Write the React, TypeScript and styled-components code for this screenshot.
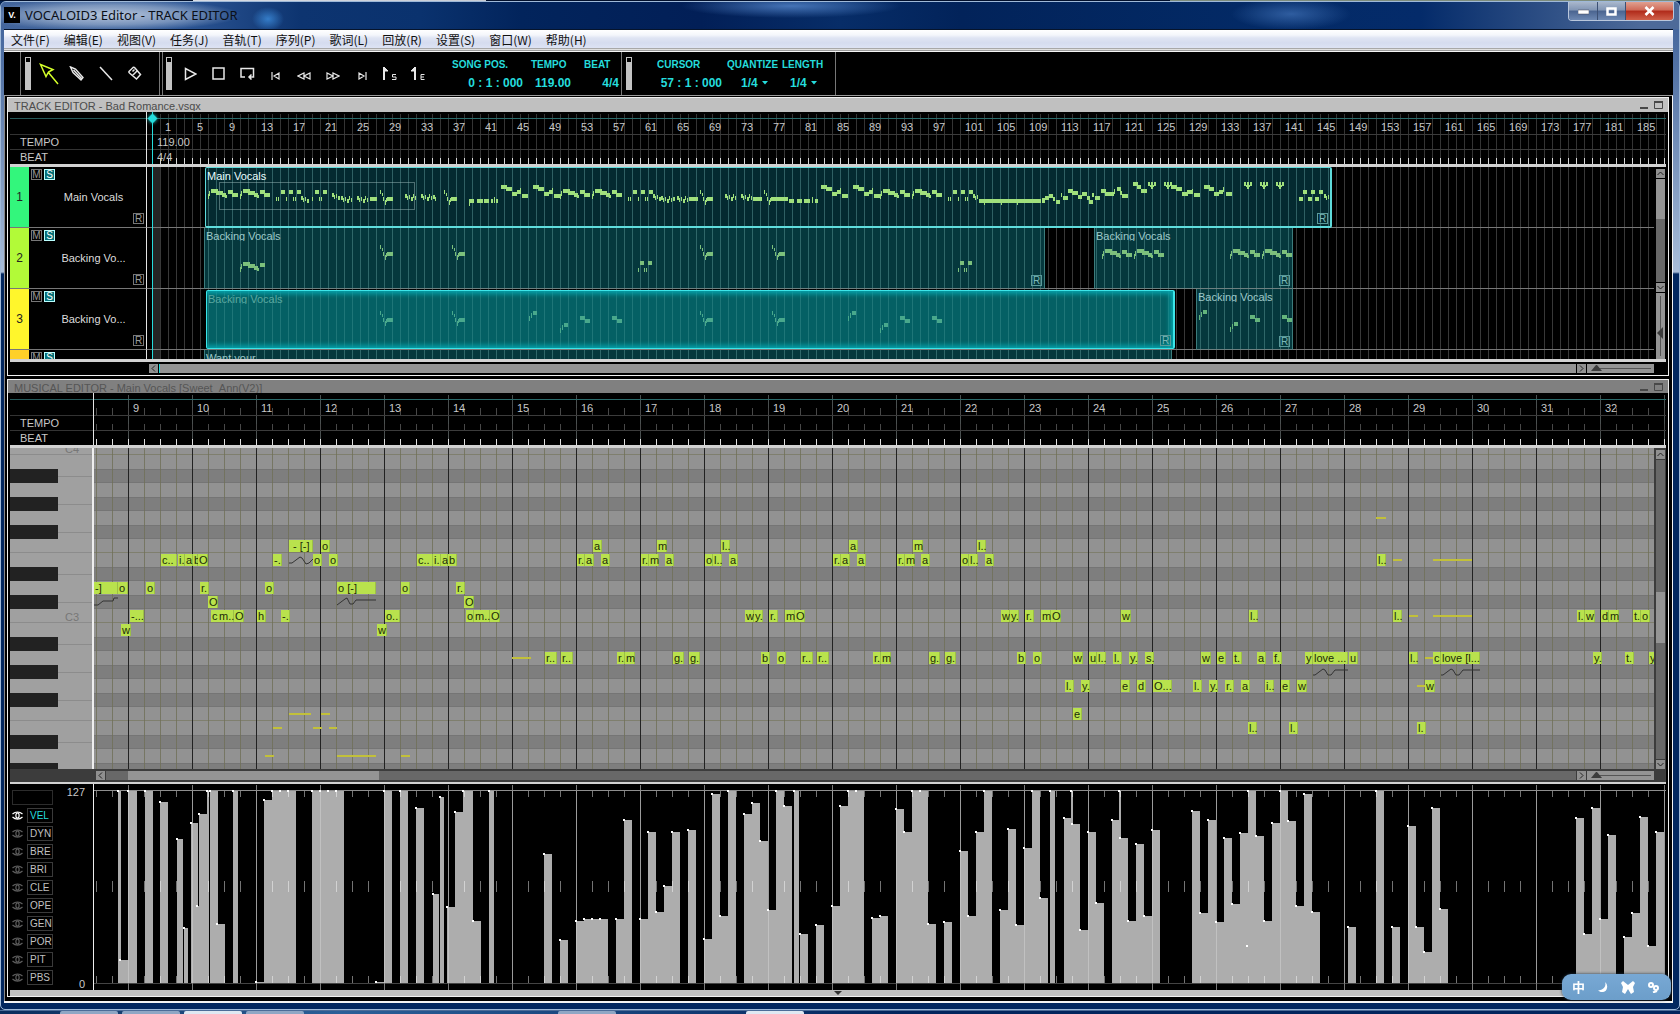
import React from "react";
import styled, { createGlobalStyle, css } from "styled-components";

/* ---------- theme values ---------- */

const UI = `"Liberation Sans", Arial, "Noto Sans CJK SC", sans-serif`;
const MENU = `"Noto Sans CJK SC", "Noto Sans", sans-serif`;
const CYAN = "#25dcdc";

const Global = createGlobalStyle`
  * { box-sizing: border-box; }
  html, body { margin: 0; background: #02204f; }
  body { font-family: ${UI}; font-size: 11px; color: #c8c8c8; overflow: hidden; }
  button, select { font: inherit; color: inherit; background: none; border: 0; padding: 0; margin: 0; }
`;

/* ---------- window chrome ---------- */

const Desktop = styled.div`
  display: flex;
  flex-direction: column;
  height: 100vh;
  min-height: 860px;
`;

const Backdrop = styled.div`
  flex: none;
  height: 1px;
  background: linear-gradient(90deg, #02102c 193px, #d8dce4 193px, #c8ccd4 486px, #02102c 486px, #02102c 1170px, #7d8c7c 1170px);
`;

const Window = styled.div`
  flex: 1;
  min-height: 0;
  display: flex;
  flex-direction: column;
  border: 1px solid #9fb9d8;
  border-radius: 6px 6px 5px 5px;
  padding: 0 6px 6px 3px;
  background: linear-gradient(180deg, #3c5f98 0, #5877a8 80px, #a9bdd8 270px, #02275f 272px, #02275f 100%);
  overflow: hidden;
`;

const TitleBar = styled.header`
  flex: none;
  display: flex;
  align-items: flex-start;
  height: 27px;
  margin: 0 -6px 0 -3px;
  padding-right: 5px;
  background:
    radial-gradient(ellipse 130px 16px at 110px 13px, rgba(225, 232, 242, 0.75), rgba(190, 205, 225, 0.5) 60%, transparent),
    radial-gradient(ellipse 16px 12px at 267px 17px, rgba(60, 140, 220, 0.8), transparent),
    radial-gradient(ellipse 110px 12px at 790px 4px, rgba(90, 140, 210, 0.75), transparent),
    radial-gradient(ellipse 60px 16px at 1290px 12px, rgba(70, 120, 190, 0.65), transparent),
    linear-gradient(90deg, #44669c 0, #2d5695 180px, #0d3470 300px, #0a326e 420px, #02245c 520px, #021f57 700px, #072d68 840px, #02235a 960px, #032a66 1260px, #042b6a 1420px, #4d6a99 1640px);
`;

const AppIcon = styled.span`
  width: 16px;
  height: 16px;
  margin: 5px 5px 0 3px;
  background: #000;
  color: #fff;
  font: bold 9px/16px ${UI};
  text-align: center;
`;

const Title = styled.h1`
  flex: 1;
  margin: 4px 0 0;
  font: 13px/18px "Noto Sans", sans-serif;
  color: #0a0f18;
`;

const Captions = styled.div`
  display: flex;
  height: 19px;
  border: 1px solid #b9c7dc;
  border-top: 0;
  border-radius: 0 0 4px 4px;
  overflow: hidden;
`;

const Caption = styled.button<{ $close?: boolean }>`
  width: ${(p) => (p.$close ? 48 : 28)}px;
  display: grid;
  place-items: center;
  background: ${(p) =>
    p.$close
      ? "linear-gradient(#e0a090 0, #cf6a58 45%, #b02a1a 50%, #d0604a 100%)"
      : "linear-gradient(#a9b7cc 0, #8195b4 45%, #4a6490 50%, #6d88b2 100%)"};
  & + & { border-left: 1px solid #3c5074; }
`;

const MenuBar = styled.nav`
  flex: none;
  display: flex;
  height: 23px;
  border-top: 1px solid #06142c;
  border-bottom: 1px solid #f4f4f4;
  box-shadow: inset 0 -1px #9a9a9a, inset 0 -2px #e0e0e0, inset 0 -3px #a8a8a8;
  background: linear-gradient(#fff 0, #f4f6fb 5px, #dfe4f3 8px, #d5dcef 13px, #dde3f4 18px);
`;

const MenuItem = styled.button`
  padding: 0 7px 2px;
  font: 12px/16px ${MENU};
  color: #111;
`;

/* ---------- tool bar ---------- */

const ToolBar = styled.div`
  flex: none;
  display: flex;
  height: 43px;
  background: #000;
  padding-left: 16px;
`;

const ToolGroup = styled.div<{ $end?: boolean; $double?: boolean; $w?: number }>`
  display: flex;
  align-items: center;
  width: ${(p) => (p.$w ? `${p.$w}px` : "auto")};
  border-left: 1px solid #777;
  ${(p) => p.$end && css`border-right: 1px solid #777;`}
  ${(p) => p.$double && css`padding-left: 2px; box-shadow: inset 2px 0 #000, inset 3px 0 #777;`}
`;

const Grip = styled.span`
  width: 6px;
  height: 33px;
  margin: 0 3px 0 4px;
  background: #c4c4c4;
  &::before {
    content: "";
    display: block;
    width: 4px;
    height: 4px;
    margin: 1px;
    background: #000;
  }
`;

const Tool = styled.button<{ $w: number; $on?: boolean }>`
  width: ${(p) => p.$w}px;
  height: 43px;
  display: grid;
  place-items: center;
  color: ${(p) => (p.$on ? "#d4ff2a" : "#e8e8e8")};
`;

const Readout = styled.div<{ $w: number; $pad?: number }>`
  display: flex;
  flex-direction: column;
  width: ${(p) => p.$w}px;
  padding-top: 2px;
  color: ${CYAN};
  font-weight: bold;
  & > span:first-child, & > label { font-size: 10px; line-height: 12px; }
  & > span:last-child { font-size: 12px; line-height: 16px; margin-top: 4px; text-align: right; padding-right: ${(p) => p.$pad ?? 0}px; white-space: pre; }
`;

const Pick = styled.span`
  display: flex;
  align-items: center;
  justify-content: flex-end;
  select { appearance: none; width: 21px; font-size: 12px; font-weight: bold; line-height: 16px; color: ${CYAN}; }
`;

const Readouts = styled.div<{ $pad: number }>`
  display: flex;
  padding-left: ${(p) => p.$pad}px;
`;

/* ---------- editor panels ---------- */

const Workspace = styled.main`
  flex: 1;
  min-height: 0;
  display: flex;
  flex-direction: column;
  gap: 3px;
  padding: 1px 3px 4px 3px;
  background: #000;
  border-top: 1px solid #9a9a9a;
  border-bottom: 2px solid #f4f4f4;
  border-right: 1px solid #f4f4f4;
  box-shadow: inset 1px 0 #888;
`;

const Panel = styled.section<{ $grow?: boolean }>`
  ${(p) => (p.$grow ? css`flex: 1; min-height: 0;` : css`flex: none;`)}
  display: flex;
  flex-direction: column;
  border: 1px solid #f0f0f0;
  background: #000;
`;

const PanelTitle = styled.h2<{ $dim?: boolean }>`
  flex: none;
  display: flex;
  align-items: center;
  gap: 6px;
  height: ${(p) => (p.$dim ? 13 : 14)}px;
  margin: 0;
  padding: 0 5px 0 6px;
  overflow: hidden;
  font: 11px/14px ${UI};
  color: ${(p) => (p.$dim ? "#555" : "#4c4c4c")};
  background: ${(p) => (p.$dim ? "#808080" : "#c0c0c0")};
  span { flex: 1; height: 12px; line-height: 14px; overflow: hidden; }
  button { height: 12px; color: #484848; display: grid; }
`;

const Row = styled.div`
  flex: none;
  display: flex;
  padding-left: 2px;
`;

const Divider = styled.div<{ $h?: number }>`
  flex: none;
  height: ${(p) => p.$h ?? 3}px;
  margin: 0 2px;
  background: #d2d2d2;
`;

const RulerHead = styled.div<{ $w: number }>`
  flex: none;
  width: ${(p) => p.$w}px;
  padding-top: 22px;
  border-right: 1px solid #e4e4e4;
  background:
    linear-gradient(#26595a, #26595a) 0 6px / 100% 1px no-repeat,
    linear-gradient(#333, #333) 0 22px / 100% 1px no-repeat,
    linear-gradient(#333, #333) 0 37px / 100% 1px no-repeat;
  div { padding-left: 10px; line-height: 15px; height: 15px; padding-top: 1px; }
`;

const rulerRules = `
  linear-gradient(#2b6a6a, #2b6a6a) 0 6px / 100% 1px no-repeat,
  linear-gradient(#3c3c3c, #3c3c3c) 0 22px / 100% 1px no-repeat,
  linear-gradient(#3c3c3c, #3c3c3c) 0 37px / 100% 1px no-repeat`;

const SongRuler = styled.div`
  flex: 1;
  min-width: 0;
  margin-right: 2px;
  height: 52px;
  padding: 7px 0 0 10px;
  overflow: hidden;
  background:
    linear-gradient(90deg, #d8d8d8 1px, transparent 1px) 5px 46px / 8px 6px repeat-x,
    ${rulerRules},
    linear-gradient(90deg, #343434 1px, transparent 1px) 5px 2px / 8px 50px repeat-x;
  div { line-height: 15px; height: 15px; padding-top: 1px; }
`;

const BarRuler = styled.div`
  flex: 1;
  min-width: 0;
  margin-right: 2px;
  height: 52px;
  padding-top: 7px;
  overflow: hidden;
  background:
    linear-gradient(90deg, #e0e0e0 1px, transparent 1px) 2px 46px / 16px 6px repeat-x,
    linear-gradient(90deg, #484848 1px, transparent 1px) 2px 31px / 16px 6px repeat-x,
    linear-gradient(90deg, #484848 1px, transparent 1px) 2px 15px / 16px 7px repeat-x,
    ${rulerRules},
    linear-gradient(90deg, #4a5050 1px, transparent 1px) 34px 2px / 64px 50px repeat-x;
`;

const Numbers = styled.ol<{ $start: number; $step: number }>`
  display: flex;
  margin: 0;
  padding: 0 0 0 ${(p) => p.$start}px;
  list-style: none;
  height: 15px;
  li { flex: none; width: ${(p) => p.$step}px; padding-left: 5px; line-height: 15px; padding-top: 1px; white-space: nowrap; }
`;

/* ---------- track list ---------- */

const Tracks = styled.div`
  position: relative;
  flex: 1;
  min-width: 0;
  height: 192px;
  overflow: hidden;
`;

const TrackRow = styled.div`
  display: flex;
  height: 61px;
  & > * { border-bottom: 1px solid #777; }
`;

const TrackNo = styled.div<{ $c: string }>`
  flex: none;
  width: 19px;
  padding-top: 23px;
  line-height: 14px;
  text-align: center;
  font-size: 12px;
  color: #222;
  background: ${(p) => p.$c};
`;

const TrackHead = styled.div`
  flex: none;
  width: 118px;
  display: grid;
  grid-template: 12px 1fr 12px / 12px 1fr 12px;
  gap: 0 1px;
  padding: 2px 1px 2px 2px;
  border-right: 1px solid #e4e4e4;
  span { grid-area: 2 / 1 / 3 / 4; align-self: center; text-align: center; padding-left: 11px; color: #ddd; height: 12px; line-height: 12px; overflow: hidden; }
`;

const Flag = styled.button<{ $on?: boolean }>`
  width: 11px;
  height: 11px;
  font-size: 10px;
  line-height: 9px;
  text-align: center;
  border: 1px solid ${(p) => (p.$on ? "#bff" : "#777")};
  background: ${(p) => (p.$on ? "#067078" : "transparent")};
  color: ${(p) => (p.$on ? "#fff" : "#999")};
`;

const RenderFlag = styled(Flag)`
  grid-area: 3 / 3;
`;

const Lane = styled.div`
  position: relative;
  flex: 1;
  min-width: 0;
  background:
    linear-gradient(90deg, transparent 6px, #242424 6px, #242424 13px, transparent 13px),
    linear-gradient(90deg, #383838 1px, transparent 1px) 5px 0 / 8px 100% repeat-x;
`;

const Clip = styled.div<{ $x: number; $w: number; $kind: "active" | "idle" | "picked" }>`
  position: absolute;
  left: ${(p) => p.$x}px;
  width: ${(p) => p.$w}px;
  top: 0;
  bottom: -1px;
  overflow: hidden;
  border: solid #3c7c7c;
  border-width: 0 1px;
  color: #9fcaca;
  --grid: rgba(90, 150, 150, 0.5);
  ${(p) => p.$kind === "active" && css`
    border: 2px solid #5fdcdc; border-width: 1px 2px 2px 1px; border-radius: 2px; background-color: #042a30; color: #e8ffff;
  `}
  ${(p) => p.$kind === "idle" && css`background-color: #05383d; border-bottom: 1px solid #6d8080;`}
  ${(p) => p.$kind === "picked" && css`
    top: 1px; bottom: 0; border: 1px solid #3ce4e8; border-right-width: 2px; border-radius: 2px; background-color: #046064; color: #5aa8a0;
    box-shadow: inset 0 6px 5px -3px #06a0a8, inset 0 -6px 5px -3px #06a0a8, inset -6px 0 5px -3px #06a0a8;
    --grid: rgba(70, 150, 150, 0.4);
  `}
  background-image: linear-gradient(90deg, var(--grid) 1px, transparent 1px);
  background-size: 8px 100%;
  background-position: ${(p) => (((5 - p.$x) % 8) + 8) % 8 - 1}px 0;
  p { margin: 0; padding: 2px 0 0 1px; height: 13px; line-height: 12px; overflow: hidden; white-space: nowrap; }
  svg { position: absolute; left: -1px; top: 0; }
  button { position: absolute; right: 2px; bottom: 2px; border-color: #5a9a9a; color: #7ab8b8; }
`;

const ViewFrame = styled.div`
  position: absolute;
  left: 72px;
  width: 196px;
  top: 15px;
  height: 28px;
  border: 1px solid rgba(150, 180, 180, 0.5);
`;

const Playhead = styled.div`
  position: absolute;
  left: 142px;
  top: 0;
  bottom: 0;
  width: 1px;
  background: ${CYAN};
`;

const RulerCursor = styled.div`
  position: relative;
  i {
    position: absolute;
    left: 5px;
    top: 0;
    width: 1px;
    height: 52px;
    background: ${CYAN};
    &::before {
      content: "";
      position: absolute;
      left: -3px;
      top: 3px;
      width: 7px;
      height: 7px;
      transform: rotate(45deg);
      background: ${CYAN};
      box-shadow: 0 0 4px ${CYAN};
    }
  }
`;

/* ---------- scroll bars ---------- */

const HBar = styled.div<{ $dim?: boolean; $pad: number }>`
  flex: none;
  display: flex;
  align-items: center;
  height: 13px;
  padding: 0 12px 0 ${(p) => p.$pad}px;
  margin: 0 2px;
  background: ${(p) => (p.$dim ? "#3c3c3c" : "#000")};
`;

const VBar = styled.div<{ $dim?: boolean }>`
  flex: none;
  width: 12px;
  margin-right: 2px;
  padding: 2px 1px 0 2px;
  display: flex;
  flex-direction: column;
  gap: 1px;
  background: ${(p) => (p.$dim ? "#3c3c3c" : "#000")};
`;

const Arrow = styled.button`
  flex: none;
  display: grid;
  place-items: center;
  width: 9px;
  height: 9px;
  background: #909090;
  color: #222;
`;

const Groove = styled.div<{ $v?: boolean; $c?: string; $lead?: number }>`
  flex: 1;
  display: flex;
  flex-direction: ${(p) => (p.$v ? "column" : "row")};
  ${(p) => (p.$v ? css`width: 9px; padding-top: ${p.$lead ?? 0}px;` : css`height: 9px; padding-left: ${p.$lead ?? 0}px; margin: 0 1px;`)}
  background: ${(p) => p.$c ?? "#686868"};
`;

const Thumb = styled.div<{ $len?: number; $v?: boolean }>`
  ${(p) => (p.$v ? css`height: ${p.$len}px;` : p.$len ? css`width: ${p.$len}px;` : css`flex: 1; border-left: 1px solid ${CYAN};`)}
  background: #949494;
`;

const Zoom = styled.div<{ $v?: boolean }>`
  flex: none;
  display: grid;
  place-items: center;
  background: #949494;
  ${(p) => (p.$v ? css`width: 9px; height: 66px;` : css`height: 9px; width: 67px; margin-left: 1px;`)}
`;

/* ---------- piano roll ---------- */

const Roll = styled.div`
  flex: 1;
  min-height: 0;
  display: flex;
  padding-left: 2px;
`;

const Keyboard = styled.div`
  flex: none;
  width: 84px;
  overflow: hidden;
  background: #a0a0a0;
  border-right: 2px solid #eee;
`;

const Key = styled.div<{ $black?: boolean; $cut?: boolean; $seam?: boolean }>`
  height: ${(p) => (p.$cut ? 7 : 14)}px;
  display: flex;
  align-items: flex-end;
  overflow: hidden;
  color: #777;
  box-shadow: ${(p) => (p.$seam ? "inset 0 -1px #8c8c8c" : "none")};
  background: ${(p) => (p.$black ? "linear-gradient(90deg, #222 48px, transparent 48px), linear-gradient(transparent 7px, #8c8c8c 7px, #8c8c8c 8px, transparent 8px)" : "none")};
  span { padding-left: 55px; line-height: 12px; }
`;

const NoteGrid = styled.div`
  position: relative;
  flex: 1;
  min-width: 0;
  overflow: hidden;
  background: #929292;
  box-shadow: inset 0 1px #444;
`;

const Pitch = styled.div<{ $black?: boolean; $cut?: boolean; $seam?: boolean }>`
  height: ${(p) => (p.$cut ? 7 : 14)}px;
  background: ${(p) => (p.$black ? "#7e7e7e" : "#929292")};
  box-shadow: ${(p) => (p.$seam ? "inset 0 -1px #7f7f6e" : p.$black ? "inset 0 1px #757575, inset 0 -1px #757575" : "none")};
`;

const BeatLines = styled.div`
  position: absolute;
  inset: 0;
  background:
    linear-gradient(90deg, #222 1px, transparent 1px) 34px 0 / 64px 100% repeat-x,
    linear-gradient(90deg, rgba(112, 112, 88, 0.8) 1px, transparent 1px) 2px 0 / 16px 100% repeat-x;
`;

const Note = styled.div<{ $x: number; $w: number; $row: number }>`
  position: absolute;
  left: ${(p) => p.$x - 94}px;
  top: ${(p) => p.$row * 14 - 6}px;
  width: ${(p) => p.$w}px;
  height: 12px;
  padding-left: 1px;
  overflow: hidden;
  white-space: pre;
  font-size: 11px;
  line-height: 13px;
  color: #1c2a08;
  background: #b9e24d;
  box-shadow: inset -1px 0 #9cc045;
`;

const Ghost = styled.div<{ $x: number; $w: number; $row: number }>`
  position: absolute;
  left: ${(p) => p.$x - 94}px;
  top: ${(p) => p.$row * 14 - 1}px;
  width: ${(p) => p.$w}px;
  height: 2px;
  background: #c2c03a;
`;

const Curves = styled.svg`
  position: absolute;
  left: 0;
  top: 0;
`;

/* ---------- control parameters ---------- */

const Control = styled.div`
  flex: none;
  display: flex;
  height: 206px;
  padding-left: 2px;
`;

const Params = styled.div`
  flex: none;
  width: 50px;
  padding: 6px 7px 0 2px;
  display: flex;
  flex-direction: column;
  gap: 3px;
  & > div:first-child { height: 15px; border: 1px solid #2c2c2c; }
`;

const Param = styled.div`
  display: flex;
  align-items: center;
  justify-content: space-between;
  height: 15px;
`;

const ParamName = styled.button<{ $on?: boolean }>`
  width: 26px;
  height: 15px;
  padding-left: 2px;
  border: 1px solid #3a3a3a;
  text-align: left;
  font-size: 10px;
  line-height: 13px;
  white-space: nowrap;
  color: ${(p) => (p.$on ? CYAN : "#c0c0c0")};
`;

const Scale = styled.div`
  flex: none;
  width: 34px;
  display: flex;
  flex-direction: column;
  justify-content: space-between;
  align-items: flex-end;
  padding: 2px 8px 0 0;
  border-right: 1px solid #eee;
  line-height: 12px;
`;

const Chart = styled.div`
  flex: 1;
  min-width: 0;
  margin-right: 2px;
  overflow: hidden;
  svg { display: block; }
`;

const StatusStrip = styled.div`
  flex: none;
  display: grid;
  place-items: center;
  height: 6px;
  margin: 0 2px;
  background: #bfbfbf;
`;

/* ---------- desktop extras ---------- */

const TaskBar = styled.footer`
  flex: none;
  display: flex;
  gap: 4px;
  height: 4px;
  padding-left: 60px;
  border-top: 1px solid #4c6c98;
  background: linear-gradient(90deg, #0a2c5c, #2c5f98 340px, #02245c 900px, #02245c);
`;

const Task = styled.span<{ $gap?: number; $lit?: boolean }>`
  width: 58px;
  margin-left: ${(p) => p.$gap ?? 0}px;
  border-radius: 2px 2px 0 0;
  background: ${(p) => (p.$lit ? "#dfe8f2" : "#8fa6c4")};
`;

const ImeBar = styled.div`
  position: fixed;
  right: 9px;
  bottom: 14px;
  width: 109px;
  height: 26px;
  display: flex;
  align-items: center;
  justify-content: space-between;
  padding: 0 12px 0 10px;
  border-radius: 9px;
  background: linear-gradient(#78a8d4, #6c9eca);
  box-shadow: 0 0 3px #234;
  color: #fff;
  button { display: grid; font: bold 13px/20px ${MENU}; }
`;

/* ---------- data ---------- */

const MENUS = ["文件(F)", "编辑(E)", "视图(V)", "任务(J)", "音轨(T)", "序列(P)", "歌词(L)", "回放(R)", "设置(S)", "窗口(W)", "帮助(H)"];

const BLACK = [2, 4, 6, 9, 11, 14, 16, 18, 21, 23];
const SEAM = [0, 7, 12, 19];

/* [row, x, width, lyric] */
const NOTES: [number, number, number, string][] = [
  [7, 289, 24, " - [-]"], [7, 321, 9, "o"],
  [8, 161, 16, "c.."], [8, 178, 7, "i."], [8, 185, 8, "a"], [8, 193, 5, "b"], [8, 198, 10, "O"],
  [8, 273, 9, "-."], [8, 313, 9, "o"], [8, 329, 9, "o"],
  [8, 417, 16, "c.."], [8, 433, 8, "i."], [8, 441, 7, "a"], [8, 448, 9, "b"],
  [10, 94, 24, "-]"], [10, 118, 10, "o"], [10, 146, 9, "o"], [10, 200, 9, "r."], [10, 265, 9, "o"],
  [10, 337, 39, "o [-]"], [10, 401, 9, "o"], [10, 456, 9, "r."],
  [11, 208, 10, "O"], [11, 464, 10, "O"],
  [12, 130, 14, "-..."], [12, 211, 8, "c"], [12, 218, 16, "m.."], [12, 234, 10, "O"], [12, 257, 9, "h"], [12, 281, 9, "-."],
  [12, 385, 15, "o.."], [12, 466, 8, "o"], [12, 474, 16, "m.."], [12, 490, 10, "O"],
  [13, 121, 10, "w"], [13, 377, 10, "w"],
  [15, 545, 12, "r.."],
  ...[0, 256].flatMap((d): [number, number, number, string][] => [
    [7, 593 + d, 9, "a"], [7, 657 + d, 10, "m"], [7, 721 + d, 9, "l.."],
    [8, 577 + d, 8, "r."], [8, 585 + d, 9, "a"], [8, 601 + d, 9, "a"],
    [8, 641 + d, 8, "r."], [8, 649 + d, 10, "m"], [8, 665 + d, 9, "a"],
    [8, 705 + d, 8, "o"], [8, 713 + d, 9, "l.."], [8, 729 + d, 9, "a"],
    [12, 745 + d, 9, "w"], [12, 754 + d, 9, "y."], [12, 769 + d, 9, "r."], [12, 785 + d, 10, "m"], [12, 795 + d, 10, "O"],
    [15, 617 + d, 8, "r."], [15, 625 + d, 10, "m"], [15, 673 + d, 11, "g."], [15, 689 + d, 11, "g."],
    [15, 761 + d, 9, "b"], [15, 777 + d, 9, "o"],
  ]),
  [15, 561, 12, "r.."], [15, 801, 12, "r.."], [15, 817, 12, "r.."],
  [15, 1073, 10, "w"], [15, 1089, 8, "u"], [15, 1097, 9, "l.."], [15, 1113, 9, "l."], [15, 1129, 9, "y."], [15, 1145, 9, "s."],
  [15, 1201, 10, "w"], [15, 1217, 9, "e"], [15, 1233, 9, "t."], [15, 1257, 9, "a"], [15, 1273, 9, "f."],
  [15, 1305, 8, "y"], [15, 1313, 35, "love ..."], [15, 1349, 9, "u"], [15, 1409, 9, "l.."], [15, 1433, 8, "c"],
  [15, 1441, 39, "love [l..."], [15, 1593, 9, "y."], [15, 1625, 9, "t."], [15, 1649, 9, "y"],
  [17, 1065, 9, "l."], [17, 1081, 9, "y."], [17, 1121, 9, "e"], [17, 1137, 9, "d"], [17, 1153, 19, "O..."],
  [17, 1193, 9, "l."], [17, 1209, 9, "y."], [17, 1225, 9, "r."], [17, 1241, 9, "a"], [17, 1265, 9, "i.."], [17, 1281, 9, "e"],
  [17, 1297, 10, "w"], [17, 1425, 10, "w"],
  [19, 1073, 9, "e"],
  [20, 1248, 9, "l.."], [20, 1289, 9, "l."], [20, 1417, 9, "l."],
  [8, 1377, 9, "l.."],
  [12, 1121, 10, "w"], [12, 1249, 9, "l.."], [12, 1393, 9, "l.."], [12, 1577, 8, "l."], [12, 1585, 10, "w"],
  [12, 1601, 8, "d"], [12, 1609, 10, "m"], [12, 1633, 8, "t."], [12, 1641, 9, "o"],
];

/* [row, x, width] of notes that belong to other parts */
const GHOSTS: [number, number, number][] = [
  [15, 512, 19], [19, 289, 22], [19, 321, 9], [20, 273, 9], [20, 313, 9], [20, 329, 8],
  [22, 265, 9], [22, 337, 39], [22, 401, 9],
  [5, 1376, 10], [8, 1393, 9], [8, 1433, 39], [12, 1409, 9], [12, 1433, 39], [15, 1425, 8], [17, 1417, 8],
];

/* [x, width, top] in window coordinates, floor at 983 */
const BARS: [number, number, number][] = [
  [118, 3, 791], [120, 8, 960], [128, 9, 791], [145, 8, 791], [160, 8, 802], [177, 6, 839], [184, 4, 928], [191, 7, 823], [197, 2, 906],
  [199, 8, 814], [207, 2, 791], [210, 8, 791], [217, 8, 924], [233, 5, 791], [256, 8, 982], [264, 8, 800], [272, 8, 791], [280, 8, 791],
  [288, 8, 791], [312, 8, 791], [320, 8, 791], [328, 8, 791], [336, 8, 791], [376, 8, 982], [384, 8, 791], [400, 8, 791], [416, 8, 808],
  [433, 6, 894], [440, 4, 797], [447, 8, 907], [455, 8, 812], [463, 10, 791], [473, 8, 921], [489, 5, 791], [544, 8, 854],
  [560, 8, 940], [576, 8, 921], [584, 8, 919], [592, 8, 919], [600, 8, 919], [616, 8, 919], [624, 8, 820], [640, 8, 919], [648, 8, 832],
  [656, 8, 912], [664, 8, 886], [672, 8, 832], [688, 8, 830], [704, 8, 939], [712, 8, 794], [720, 8, 916], [728, 8, 791], [744, 8, 814],
  [752, 8, 803], [760, 8, 841], [768, 8, 910], [776, 8, 791], [784, 8, 806], [794, 5, 791], [800, 8, 934], [816, 8, 925], [832, 8, 906],
  [840, 8, 806], [848, 8, 791], [856, 8, 791], [872, 8, 918], [880, 8, 916], [896, 8, 809], [904, 8, 832], [912, 8, 791], [920, 8, 791],
  [928, 8, 924], [944, 8, 922], [960, 8, 851], [968, 8, 916], [976, 8, 832], [984, 8, 791], [1000, 8, 910], [1008, 8, 829], [1016, 8, 925],
  [1024, 8, 848], [1032, 8, 791], [1040, 8, 898], [1050, 5, 791], [1064, 8, 818], [1071, 2, 791], [1072, 8, 824], [1080, 8, 930],
  [1088, 8, 832], [1096, 8, 903], [1112, 8, 820], [1119, 2, 791], [1120, 8, 838], [1128, 8, 921], [1136, 8, 844], [1144, 8, 916],
  [1152, 8, 830], [1192, 8, 811], [1200, 8, 913], [1208, 8, 820], [1216, 8, 922], [1224, 8, 838], [1232, 8, 904], [1240, 8, 833],
  [1247, 1, 946], [1248, 8, 791], [1256, 8, 836], [1264, 8, 921], [1272, 8, 823], [1280, 8, 791], [1288, 8, 821], [1296, 8, 906],
  [1304, 8, 794], [1312, 8, 912], [1348, 8, 927], [1376, 8, 791], [1392, 8, 927], [1408, 8, 826], [1416, 8, 927], [1424, 8, 952],
  [1432, 8, 808], [1440, 8, 909], [1576, 8, 818], [1584, 8, 934], [1592, 8, 808], [1600, 8, 919], [1608, 8, 835], [1624, 8, 937],
  [1632, 8, 913], [1640, 8, 817], [1648, 8, 946], [1656, 8, 832],
];

/* Overview phrases: [x, y, width, height] blocks built from short motifs */
type Block = [number, number, number, number];
const at = (blocks: Block[], dx: number, dy = 0): Block[] => blocks.map(([x, y, w, h]) => [x + dx, y + dy, w, h]);
const zig = (x: number, y: number, w: number): Block[] =>
  Array.from({ length: Math.floor(w / 2) }, (_, i): Block => [x + i * 2, y + [0, 2, 1, 3][i % 4], i % 3 ? 1 : 2, 4]);
const comb = (x: number, y: number): Block[] => [[x, y, 2, 4], [x + 3, y, 2, 7], [x + 6, y, 2, 4], [x + 2, y + 3, 4, 2]];

const ARC: Block[] = [[0, 27, 1, 5], [1, 24, 1, 5], [3, 22, 7, 4], [8, 24, 7, 4], [14, 26, 4, 4], [17, 28, 2, 3], [20, 23, 5, 4], [24, 26, 6, 4]];
const FALL: Block[] = [[0, 18, 6, 4], [5, 20, 6, 4], [11, 25, 5, 4], [16, 23, 4, 4], [19, 21, 1, 4], [21, 27, 6, 4]];
const HOP: Block[] = [[0, 30, 1, 4], [2, 30, 1, 4], [5, 23, 4, 4], [10, 30, 1, 4], [13, 23, 4, 4], [17, 30, 1, 4], [19, 30, 1, 4], [21, 23, 4, 4]];
const VEE: Block[] = [[0, 23, 1, 4], [2, 26, 1, 3], [3, 30, 1, 4], [5, 33, 1, 5], [6, 31, 1, 4], [7, 30, 6, 4]];
const HOOK: Block[] = [[0, 5, 1, 5], [2, 2, 1, 5], [4, 0, 4, 4]];
const STEP: Block[] = [[0, 0, 5, 4], [5, 3, 5, 4]];

const MAIN: Block[] = [
  ...at(ARC, 208), ...at(ARC, 240), ...at(HOP, 276), ...zig(301, 29, 8), ...at(HOP.slice(3), 302), ...zig(332, 26, 8), ...zig(341, 29, 13),
  ...zig(357, 29, 13), [370, 30, 7, 4], ...at(VEE, 380), ...zig(405, 27, 12), ...zig(421, 27, 17), ...at(VEE, 444),
  [469, 32, 5, 4], [469, 35, 1, 4], [477, 32, 6, 4], [484, 32, 5, 4], [491, 32, 2, 4], [494, 30, 1, 6], [496, 32, 2, 4],
  ...at(FALL, 501), ...at(FALL, 533), ...at(ARC, 560), ...at(ARC, 592),
  ...at(HOP, 628), ...zig(653, 27, 8), ...zig(661, 29, 14), ...zig(677, 29, 14), [691, 30, 7, 4], ...at(VEE, 700),
  ...zig(725, 27, 12), ...zig(741, 27, 13), [753, 30, 9, 4], ...at(VEE, 764), [772, 30, 16, 4],
  [789, 32, 5, 4], [797, 32, 5, 4], [804, 32, 6, 4], [812, 30, 1, 6], [815, 32, 3, 4],
  ...at(FALL, 821), ...at(FALL, 853), ...at(ARC, 880), ...at(ARC, 912), ...at(HOP, 948), ...zig(973, 27, 7),
  [979, 32, 62, 4], [984, 35, 1, 3], [1001, 35, 1, 3], [1017, 35, 1, 3],
  [1042, 31, 3, 5], [1045, 29, 4, 4], [1049, 27, 4, 4], [1053, 30, 2, 4], [1056, 33, 4, 4], [1061, 26, 1, 4], [1063, 29, 5, 4],
  [1068, 22, 5, 4], [1072, 24, 6, 4], [1078, 28, 4, 4], [1082, 25, 5, 4], [1087, 29, 3, 4], [1089, 33, 4, 4], [1092, 26, 2, 4],
  [1095, 29, 5, 4], [1101, 22, 5, 4], [1105, 25, 9, 4], [1114, 22, 1, 5], [1117, 20, 4, 4], [1120, 24, 2, 4], [1122, 27, 6, 4],
  [1133, 15, 5, 4], [1137, 18, 4, 4], [1141, 22, 6, 4], ...comb(1148, 15), ...comb(1164, 15), [1171, 18, 6, 4], [1176, 20, 6, 4],
  [1182, 25, 6, 4], [1187, 23, 5, 4], [1192, 22, 1, 5], [1194, 26, 6, 4], [1204, 18, 6, 4], [1209, 20, 5, 4], [1214, 25, 5, 4],
  [1219, 23, 4, 4], [1223, 20, 1, 5], [1226, 25, 6, 4], ...comb(1244, 15), ...comb(1260, 15), ...comb(1276, 15),
  [1299, 30, 4, 4], [1303, 23, 4, 4], [1308, 30, 4, 4], [1311, 23, 4, 4], [1315, 30, 4, 4], [1319, 23, 4, 4], ...zig(1324, 27, 6),
];
const LOW_HOP: Block[] = at([[0, 34, 1, 4], [2, 27, 4, 4], [6, 34, 1, 4], [8, 34, 1, 4], [10, 27, 4, 4]], 0, 7);
const BACK_A: Block[] = [
  ...at(ARC.slice(0, 7), 240, 13), ...at(VEE, 380, -5), ...at(VEE, 452, -5), ...at(VEE, 700, -5), ...at(VEE, 772, -5),
  ...at(LOW_HOP, 638), ...at(LOW_HOP, 958),
];
const BACK_B: Block[] = [...at(ARC, 1102), ...at(ARC, 1134), ...at(ARC, 1230), ...at(ARC, 1262)];
const BACK_C: Block[] = [
  ...at(VEE, 380, -2), ...at(VEE, 452, -2), ...at(VEE, 700, -2), ...at(VEE, 772, -2),
  ...at(HOOK, 529, 21), ...at(HOOK, 560, 33), ...at(STEP, 580, 26), ...at(STEP, 612, 26),
  ...at(HOOK, 848, 21), ...at(HOOK, 880, 33), ...at(STEP, 900, 26), ...at(STEP, 932, 26),
];
const BACK_D: Block[] = [...at(HOOK, 1199, 22), ...at(HOOK, 1230, 34), ...at(STEP, 1250, 27), ...at(STEP, 1282, 27)];

interface ClipData { x: number; w: number; kind: "active" | "idle" | "picked"; name: string; blocks: Block[]; tint: string; flag: boolean }
interface TrackData { no: number; color: string; name: string; clips: ClipData[] }

const TRACKS: TrackData[] = [
  { no: 1, color: "#33f67c", name: "Main Vocals", clips: [
    { x: 205, w: 1127, kind: "active", name: "Main Vocals", blocks: MAIN, tint: "#a0e07c", flag: true },
  ] },
  { no: 2, color: "#b2fa38", name: "Backing Vo...", clips: [
    { x: 204, w: 841, kind: "idle", name: "Backing Vocals", blocks: BACK_A, tint: "#7cc07c", flag: true },
    { x: 1094, w: 199, kind: "idle", name: "Backing Vocals", blocks: BACK_B, tint: "#7cc07c", flag: true },
  ] },
  { no: 3, color: "#fff62c", name: "Backing Vo...", clips: [
    { x: 206, w: 969, kind: "picked", name: "Backing Vocals", blocks: BACK_C, tint: "#48a88c", flag: true },
    { x: 1196, w: 97, kind: "idle", name: "Backing Vocals", blocks: BACK_D, tint: "#64b47c", flag: true },
  ] },
  { no: 4, color: "#ffd028", name: "", clips: [
    { x: 204, w: 968, kind: "idle", name: "Want your", blocks: [], tint: "#7cc07c", flag: false },
  ] },
];

const PARAMS = ["VEL", "DYN", "BRE", "BRI", "CLE", "OPE", "GEN", "POR", "PIT", "PBS"];

/* ---------- icons ---------- */

const Icon = ({ w, h, children }: { w: number; h: number; children: React.ReactNode }) => (
  <svg width={w} height={h} viewBox={`0 0 ${w} ${h}`} fill="none" stroke="currentColor" strokeWidth="1.5" aria-hidden="true">{children}</svg>
);

const TOOLS: { label: string; w: number; on?: boolean; art: React.ReactNode }[] = [
  { label: "Arrow", w: 29, on: true, art: <Icon w={20} h={22}><path d="M1.500 1.500 14 6.500 9.500 9 7 13.500Z M9 9 19 21" /></Icon> },
  { label: "Pencil", w: 28, art: <Icon w={16} h={16}><path d="M1.500 1 6.500 3 14 11.500 12 14 4 6.500Z M4.500 4l8 8.500" strokeWidth="1.400" /></Icon> },
  { label: "Line", w: 30, art: <Icon w={14} h={15}><path d="M1 1 13 14" /></Icon> },
  { label: "Eraser", w: 28, art: <Icon w={14} h={15}><path d="M1 5.500 5 1.500Q6 1 7 2L12.500 8.500 8.500 13 2 7.500Q.5 6.500 1 5.500Z M4.500 9.500 9 5M4.500 5.500l2-2" /></Icon> },
];

const TRANSPORT: { label: string; w: number; art: React.ReactNode }[] = [
  { label: "Play", w: 30, art: <Icon w={13} h={14}><path d="M1.500 1.500v11L12 7Z" /></Icon> },
  { label: "Stop", w: 27, art: <Icon w={13} h={13}><path d="M1 1h11v11H1Z" /></Icon> },
  { label: "Loop", w: 30, art: <Icon w={15} h={13}><path d="M5 10H1V1.500h12.500V10H9.500 M11.500 7.500 9 10l2.500 2.500" /></Icon> },
  { label: "To start", w: 27, art: <Icon w={9} h={12}><path d="M1 4v8 M8 5v6L3 8Z" strokeWidth="1.200" /></Icon> },
  { label: "Rewind", w: 29, art: <Icon w={14} h={12}><path d="M7 5v6L1 8Z M13 5v6L7 8Z" strokeWidth="1.200" /></Icon> },
  { label: "Forward", w: 30, art: <Icon w={14} h={12}><path d="M1 5v6l6-3Z M7 5v6l6-3Z" strokeWidth="1.200" /></Icon> },
  { label: "To end", w: 28, art: <Icon w={9} h={12}><path d="M8 4v8 M1 5v6l5-3Z" strokeWidth="1.200" /></Icon> },
  { label: "Start marker", w: 27, art: <Icon w={15} h={15}><path d="M2 1v13" strokeWidth="2" /><path d="M2 1l4 4H2Z" fill="currentColor" strokeWidth="1" /><path d="M14 8.500h-3.500v2.500H14v2.500h-4" strokeWidth="1" /></Icon> },
  { label: "End marker", w: 28, art: <Icon w={15} h={15}><path d="M5 1v13" strokeWidth="2" /><path d="M5 1 1 5h4Z" fill="currentColor" strokeWidth="1" /><path d="M14.500 8.500H11v5h3.500 M11 11h3" strokeWidth="1" /></Icon> },
];

const Chevron = ({ d }: { d: string }) => (
  <svg width="7" height="7" viewBox="0 0 7 7" fill="none" stroke="currentColor" aria-hidden="true"><path d={d} /></svg>
);

const Eye = ({ on }: { on?: boolean }) => (
  <svg width="11" height="9" viewBox="0 0 11 9" fill="none" stroke={on ? "#fff" : "#5c5c5c"} strokeWidth="1.200" aria-hidden="true">
    <path d="M.5 3C3.500.3 7.500.3 10.500 3 M.5 6C3.500 8.700 7.500 8.700 10.500 6" /><ellipse cx="5.500" cy="4.500" rx="1.600" ry="2.600" />
  </svg>
);

/* ---------- parts ---------- */

const PanelButtons = () => (
  <>
    <button aria-label="Minimize panel"><svg width="8" height="12"><rect y="8" width="8" height="2" fill="currentColor" /></svg></button>
    <button aria-label="Maximize panel"><svg width="9" height="12"><path d="M.5 3v6.500h8V3" fill="none" stroke="currentColor" /><rect y="2" width="9" height="2" fill="currentColor" /></svg></button>
  </>
);

const HScroll = ({ pad, dim, lead, len }: { pad: number; dim?: boolean; lead?: number; len?: number }) => (
  <HBar $pad={pad} $dim={dim}>
    <Arrow aria-label="Scroll left"><Chevron d="M5 .5 2 3.500l3 3" /></Arrow>
    <Groove $lead={lead} $c={dim ? "#686868" : "#949494"}><Thumb $len={len} /></Groove>
    <Arrow aria-label="Scroll right"><Chevron d="M2 .5l3 3-3 3" /></Arrow>
    <Zoom><svg width="60" height="9"><path d="M8 4.500h52" stroke="#555" /><path d="M0 7 5 1h1l5 6Z" fill="#3c3c3c" /></svg></Zoom>
  </HBar>
);

const ClipView = ({ clip }: { clip: ClipData }) => (
  <Clip $x={clip.x - 147} $w={clip.w} $kind={clip.kind}>
    <p>{clip.name}</p>
    <svg width={clip.w} height="60" fill={clip.tint} shapeRendering="crispEdges" aria-hidden="true">
      {clip.blocks.map(([x, y, w, h], i) => <rect key={i} x={x - clip.x} y={y - 1} width={w} height={h} />)}
    </svg>
    {clip.flag && <Flag aria-label="Render">R</Flag>}
  </Clip>
);

const VelocityChart = () => {
  const bars = Array.from({ length: 26 }, (_, i) => 34 + i * 64);
  const beats = Array.from({ length: 100 }, (_, i) => 2 + i * 16).filter((x) => (x - 34) % 64 !== 0);
  return (
    <svg width="1573" height="206" shapeRendering="crispEdges" role="img" aria-label="Velocity">
      <path d="M0 199.500H1573" stroke="#444" />
      {bars.map((x) => <rect key={x} x={x} y="1" width="1" height="205" fill="#7a7a7a" />)}
      {BARS.map(([x, w, y], i) => <rect key={i} x={x - 94} y={y - 784} width={w} height={983 - y} fill="#adadad" />)}
      {bars.map((x) => <rect key={x} x={x} y="6" width="1" height="193" fill="#fff" opacity="0.25" />)}
      {beats.map((x) => (
        <g key={x} fill="#fff" opacity="0.45">
          <rect x={x} y="6" width="1" height="7" /><rect x={x} y="97" width="1" height="11" /><rect x={x} y="192" width="1" height="7" />
        </g>
      ))}
      <rect x="0" y="6" width="1573" height="1" fill="#8e8e8e" />
      {BARS.map(([x, , y], i) => <rect key={i} x={x - 95} y={y - 785} width="2" height="2" fill="#fff" />)}
    </svg>
  );
};

export default function App() {
  return (
    <>
      <Global />
      <Desktop>
        <Backdrop />
        <Window>
          <TitleBar>
            <AppIcon>V.</AppIcon>
            <Title>VOCALOID3 Editor - TRACK EDITOR</Title>
            <Captions>
              <Caption aria-label="Minimize"><svg width="11" height="8"><rect y="3" width="11" height="4" fill="#fff" stroke="#445" strokeWidth=".5" /></svg></Caption>
              <Caption aria-label="Restore"><svg width="11" height="9"><path d="M1.500 1.500h8v6h-8Z" fill="none" stroke="#fff" strokeWidth="2.500" /></svg></Caption>
              <Caption $close aria-label="Close"><svg width="11" height="10"><path d="M1.500 1l8 8M9.500 1l-8 8" stroke="#fff" strokeWidth="2.600" /></svg></Caption>
            </Captions>
          </TitleBar>
          <MenuBar>{MENUS.map((m) => <MenuItem key={m}>{m}</MenuItem>)}</MenuBar>

          <ToolBar>
            <ToolGroup $w={139}>
              <Grip />
              {TOOLS.map((t) => <Tool key={t.label} $w={t.w} $on={t.on} aria-label={t.label}>{t.art}</Tool>)}
            </ToolGroup>
            <ToolGroup $double>
              <Grip />
              {TRANSPORT.map((t) => <Tool key={t.label} $w={t.w} aria-label={t.label}>{t.art}</Tool>)}
              <Readouts $pad={21}>
                <Readout $w={79} $pad={8}><span>SONG POS.</span><span>0 : 1 : 000</span></Readout>
                <Readout $w={53} $pad={13}><span>TEMPO</span><span>119.00</span></Readout>
                <Readout $w={37} $pad={2}><span>BEAT</span><span>4/4</span></Readout>
              </Readouts>
            </ToolGroup>
            <ToolGroup $end>
              <Grip />
              <Readouts $pad={22}>
                <Readout $w={70} $pad={5}><span>CURSOR</span><span>57 : 1 : 000</span></Readout>
                <Readout $w={55} $pad={14}>
                  <label htmlFor="quantize">QUANTIZE</label>
                  <Pick><select id="quantize"><option>1/4</option></select><svg width="6" height="4"><path d="M0 0h6L3 3.500Z" fill={CYAN} /></svg></Pick>
                </Readout>
                <Readout $w={53} $pad={18}>
                  <label htmlFor="length">LENGTH</label>
                  <Pick><select id="length"><option>1/4</option></select><svg width="6" height="4"><path d="M0 0h6L3 3.500Z" fill={CYAN} /></svg></Pick>
                </Readout>
              </Readouts>
            </ToolGroup>
          </ToolBar>

          <Workspace>
            <Panel>
              <PanelTitle><span>TRACK EDITOR - Bad Romance.vsqx</span><PanelButtons /></PanelTitle>
              <Row>
                <RulerHead $w={137}><div>TEMPO</div><div>BEAT</div></RulerHead>
                <RulerCursor><i /></RulerCursor>
                <SongRuler>
                  <Numbers $start={3} $step={32}>{Array.from({ length: 47 }, (_, i) => <li key={i}>{1 + i * 4}</li>)}</Numbers>
                  <div>119.00</div>
                  <div>4/4</div>
                </SongRuler>
              </Row>
              <Divider />
              <Row>
                <Tracks>
                  {TRACKS.map((t) => (
                    <TrackRow key={t.no}>
                      <TrackNo $c={t.color}>{t.no < 4 && t.no}</TrackNo>
                      <TrackHead>
                        <Flag aria-label="Mute">M</Flag>
                        <Flag $on aria-label="Solo">S</Flag>
                        <span>{t.name}</span>
                        {t.no < 4 && <RenderFlag aria-label="Render">R</RenderFlag>}
                      </TrackHead>
                      <Lane>
                        {t.clips.map((c) => <ClipView key={c.x} clip={c} />)}
                        {t.no === 1 && <ViewFrame />}
                      </Lane>
                    </TrackRow>
                  ))}
                  <Playhead />
                </Tracks>
                <VBar>
                  <Arrow aria-label="Scroll up"><Chevron d="M.5 5l3-3 3 3" /></Arrow>
                  <Groove $v><Thumb $v $len={40} /></Groove>
                  <Arrow aria-label="Scroll down"><Chevron d="M.5 2l3 3 3-3" /></Arrow>
                  <Zoom $v><svg width="9" height="60"><path d="M4.500 0v60" stroke="#555" /><path d="M1 37l6-6v12Z" fill="#3c3c3c" /></svg></Zoom>
                </VBar>
              </Row>
              <Divider />
              <HScroll pad={139} />
            </Panel>

            <Panel $grow>
              <PanelTitle $dim><span>MUSICAL EDITOR - Main Vocals [Sweet_Ann(V2)]</span><PanelButtons /></PanelTitle>
              <Row>
                <RulerHead $w={84}><div>TEMPO</div><div>BEAT</div></RulerHead>
                <BarRuler>
                  <Numbers $start={34} $step={64}>{Array.from({ length: 24 }, (_, i) => <li key={i}>{9 + i}</li>)}</Numbers>
                </BarRuler>
              </Row>
              <Divider />
              <Roll>
                <Keyboard>
                  {Array.from({ length: 26 }, (_, i) => (
                    <Key key={i} $cut={i === 0} $black={BLACK.includes(i)} $seam={SEAM.includes(i)}>
                      {i === 0 && <span>C4</span>}
                      {i === 12 && <span>C3</span>}
                    </Key>
                  ))}
                </Keyboard>
                <NoteGrid>
                  {Array.from({ length: 26 }, (_, i) => <Pitch key={i} $cut={i === 0} $black={BLACK.includes(i)} $seam={SEAM.includes(i)} />)}
                  <BeatLines />
                  {GHOSTS.map(([row, x, w], i) => <Ghost key={i} $row={row} $x={x} $w={w} />)}
                  {NOTES.map(([row, x, w, text], i) => <Note key={i} $row={row} $x={x} $w={w}>{text}</Note>)}
                  <Curves width="1560" height="320" fill="none" stroke="#333" aria-hidden="true">
                    <path d="M195 115h3l8-6 2 1 4 6 3-1 4-4" />
                    <path d="M0 157h4l5-4h10l1-3h4" />
                    <path d="M243 157l8-6 2-1 3 6h3l3-4h20" />
                    <path d="M1219 227h2l8-6 2 1 3 5h3l4-5h13" />
                    <path d="M1347 227h2l8-6 2 1 3 5h3l4-5h17" />
                  </Curves>
                </NoteGrid>
                <VBar $dim>
                  <Arrow aria-label="Scroll up"><Chevron d="M.5 5l3-3 3 3" /></Arrow>
                  <Groove $v $lead={132}><Thumb $v $len={51} /></Groove>
                  <Arrow aria-label="Scroll down"><Chevron d="M.5 2l3 3 3-3" /></Arrow>
                </VBar>
              </Roll>
              <HScroll dim pad={86} lead={22} len={251} />
              <Divider $h={2} />
              <Control>
                <Params>
                  <div />
                  {PARAMS.map((p, i) => <Param key={p}><Eye on={i === 0} /><ParamName $on={i === 0}>{p}</ParamName></Param>)}
                </Params>
                <Scale><span>127</span><span>0</span></Scale>
                <Chart><VelocityChart /></Chart>
              </Control>
              <StatusStrip><svg width="8" height="5"><path d="M0 0h8L4 4Z" fill="#333" /></svg></StatusStrip>
            </Panel>
          </Workspace>
        </Window>
        <TaskBar>
          <Task /><Task /><Task $lit /><Task />
          <Task $gap={250} /><Task $gap={126} $lit />
        </TaskBar>
      </Desktop>

      <ImeBar>
        <button aria-label="Chinese input">中</button>
        <button aria-label="Half width"><svg width="10" height="10"><path d="M7 0a6 6 0 0 1-7 8 5 5 0 0 0 9-2 6 6 0 0 0-2-6Z" fill="#fff" /></svg></button>
        <button aria-label="Skin"><svg width="14" height="13"><path d="M7 4 2 0 0 2l2 4-1 5 3 2 3-5 3 5 3-2-1-5 2-4-2-2Z" fill="#fff" /></svg></button>
        <button aria-label="Settings"><svg width="11" height="11" fill="none" stroke="#fff" strokeWidth="2"><circle cx="3" cy="3" r="2" /><circle cx="8" cy="6" r="2" /><path d="M5 10.500 9 9" /></svg></button>
      </ImeBar>
    </>
  );
}
